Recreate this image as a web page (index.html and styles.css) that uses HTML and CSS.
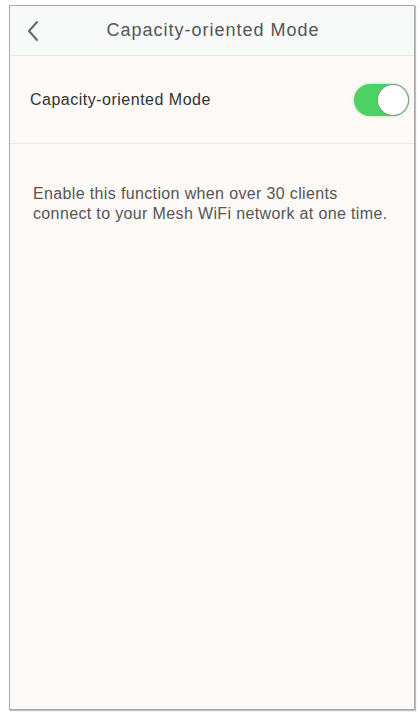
FILE: index.html
```html
<!DOCTYPE html>
<html>
<head>
<meta charset="utf-8">
<link rel="stylesheet" href="styles.css">
</head>
<body>
<div class="phone">
  <header class="nav">
    <svg class="back" width="14" height="22" viewBox="0 0 14 22"><path d="M11 2 L3 11 L11 20" fill="none" stroke="#666" stroke-width="2" stroke-linecap="round" stroke-linejoin="round"/></svg>
    <h1 class="title">Capacity-oriented Mode</h1>
  </header>
  <main class="content">
    <div class="row">
      <span class="label">Capacity-oriented Mode</span>
      <span class="toggle"><span class="knob"></span></span>
    </div>
    <p class="desc">Enable this function when over 30 clients connect to your Mesh WiFi network at one time.</p>
  </main>
</div>
</body>
</html>
```
FILE: styles.css
```css
html, body {
  margin: 0;
  padding: 0;
  background: #fff;
}
body {
  font-family: "Liberation Sans", Arial, sans-serif;
  padding: 5px 5px 2px 9px;
  height: 712px;
  box-sizing: border-box;
}
.phone {
  height: 100%;
  box-sizing: border-box;
  border: 1px solid #a9a9a9;
  box-shadow: 1px 1px 1px #bdbdbd;
  background: #fcf9f6;
  display: flex;
  flex-direction: column;
}
.nav {
  height: 49px;
  flex: none;
  background: #f8f9f9;
  border-bottom: 1px solid #e8e6e4;
  display: flex;
  align-items: center;
  position: relative;
  padding-left: 16px;
}
.back {
  display: block;
}
.title {
  position: absolute;
  left: 0;
  right: 0;
  text-align: center;
  margin: 0;
  font-weight: normal;
  font-size: 18px;
  letter-spacing: 1px;
  color: #555;
  pointer-events: none;
  padding-left: 2px;
}
.content {
  flex: 1;
}
.row {
  height: 87px;
  display: flex;
  align-items: center;
  justify-content: space-between;
  padding: 0 5px 0 20px;
  border-bottom: 1px solid #ebe8e5;
}
.label {
  font-size: 16px;
  letter-spacing: 0.5px;
  color: #333;
}
.toggle {
  width: 55px;
  height: 32px;
  border-radius: 16px;
  background: #4cd164;
  box-shadow: 0 0 3px rgba(76, 209, 100, 0.6);
  display: flex;
  align-items: center;
  justify-content: flex-end;
  padding: 0 1px;
  box-sizing: border-box;
}
.knob {
  width: 30px;
  height: 30px;
  border-radius: 50%;
  background: #fff;
  box-shadow: 0 0 0 1px #8a9a8e;
}
.desc {
  margin: 40px 20px 0 23px;
  font-size: 16px;
  letter-spacing: 0.36px;
  line-height: 20px;
  color: #555;
}
```
